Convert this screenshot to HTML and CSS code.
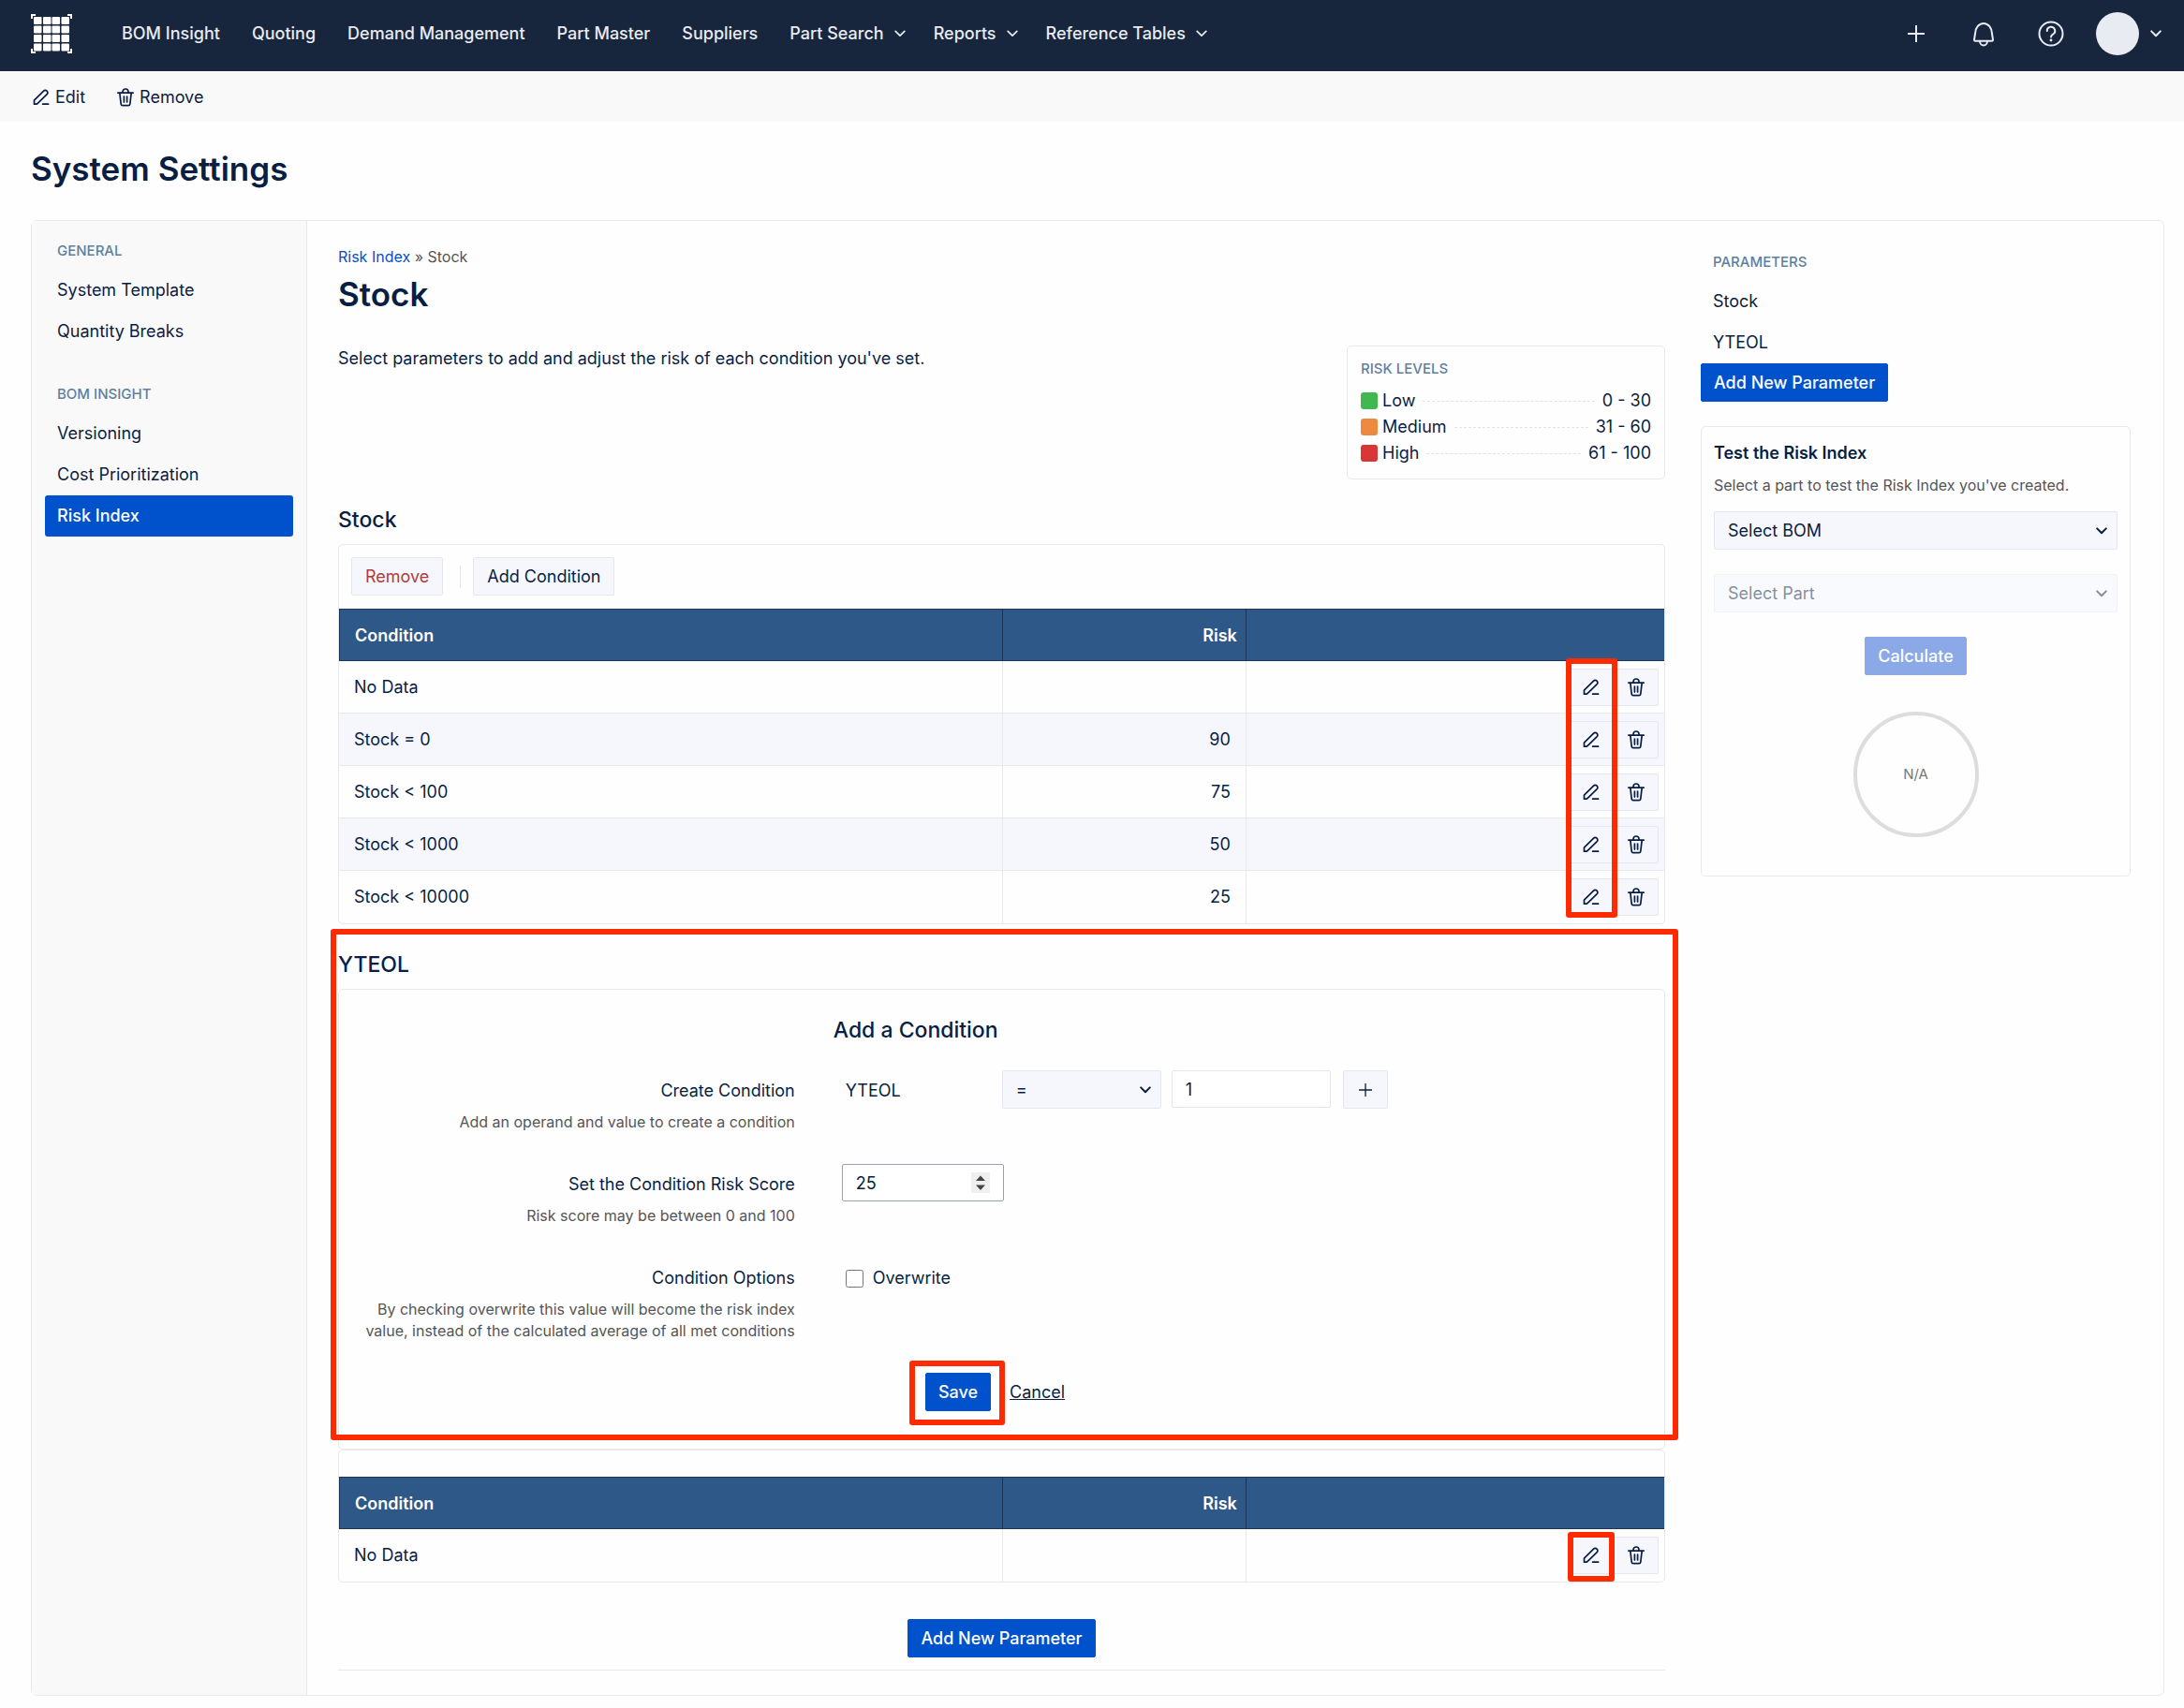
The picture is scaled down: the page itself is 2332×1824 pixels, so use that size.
FILE: index.html
```html
<!DOCTYPE html>
<html lang="en">
<head>
    <meta charset="UTF-8">
    <meta name="viewport" content="width=device-width, initial-scale=1.0">
    <title>System Settings - Risk Index</title>
    <link rel="stylesheet" href="styles.css">
</head>
<body>
    <svg class="sprite" aria-hidden="true">
        <symbol id="icon-edit" viewBox="0 0 18 18">
            <path d="M1.5 16.2v-4L11.6 2.1a2.4 2.4 0 0 1 3.4 0l.2.2a2.4 2.4 0 0 1 0 3.4L5 15.6l-1 .6zM10.6 16.2h6"/>
        </symbol>
        <symbol id="icon-trash" viewBox="0 0 18 20">
            <path d="M.8 5.2h16.4M2.8 5.2l1.4 11.9a1.8 1.8 0 0 0 1.8 1.6h6a1.8 1.8 0 0 0 1.8-1.6l1.4-11.9M6 5V4a3 3 0 0 1 6 0v1M7.4 9v6M10.6 9v6"/>
        </symbol>
        <symbol id="icon-chevron" viewBox="0 0 12 8">
            <path d="M1.2 1.4 6 6.2l4.8-4.8"/>
        </symbol>
        <symbol id="icon-plus" viewBox="0 0 18 18">
            <path d="M9 .5v17M.5 9h17"/>
        </symbol>
    </svg>

    <header class="topbar">
        <a href="#" class="logo" aria-label="Home">
            <svg width="44" height="42" viewBox="0 0 44 42">
                <path class="logo-corner" d="M1 5V1h4M39 1h4v4M1 37v4h4M39 41h4v-4"/>
                <g class="logo-grid">
                    <rect x="3" y="3" width="8.500" height="8" rx="1"/><rect x="13" y="3" width="8.500" height="8" rx="1"/><rect x="22.500" y="3" width="8.500" height="8" rx="1"/><rect x="32.500" y="3" width="8.500" height="8" rx="1"/>
                    <rect x="3" y="12.500" width="8.500" height="8" rx="1"/><rect x="13" y="12.500" width="8.500" height="8" rx="1"/><rect x="22.500" y="12.500" width="8.500" height="8" rx="1"/><rect x="32.500" y="12.500" width="8.500" height="8" rx="1"/>
                    <rect x="3" y="22" width="8.500" height="8" rx="1"/><rect x="13" y="22" width="8.500" height="8" rx="1"/><rect x="22.500" y="22" width="8.500" height="8" rx="1"/><rect x="32.500" y="22" width="8.500" height="8" rx="1"/>
                    <rect x="3" y="31.500" width="8.500" height="8" rx="1"/><rect x="13" y="31.500" width="8.500" height="8" rx="1"/><rect x="22.500" y="31.500" width="8.500" height="8" rx="1"/><rect x="32.500" y="31.500" width="8.500" height="8" rx="1"/>
                </g>
            </svg>
        </a>
        <nav class="main-nav">
            <a href="#">BOM Insight</a>
            <a href="#">Quoting</a>
            <a href="#">Demand Management</a>
            <a href="#">Part Master</a>
            <a href="#">Suppliers</a>
            <a href="#" class="has-menu">Part Search <svg class="icon chevron"><use href="#icon-chevron"/></svg></a>
            <a href="#" class="has-menu">Reports <svg class="icon chevron"><use href="#icon-chevron"/></svg></a>
            <a href="#" class="has-menu">Reference Tables <svg class="icon chevron"><use href="#icon-chevron"/></svg></a>
        </nav>
        <div class="top-actions">
            <button type="button" aria-label="Add"><svg class="icon" width="18" height="18"><use href="#icon-plus"/></svg></button>
            <button type="button" aria-label="Notifications">
                <svg class="icon" width="24" height="28" viewBox="0 0 24 28"><path d="M3 14a9 11 0 0 1 18 0l1 6.400a1.200 1.200 0 0 1-1.200 1.400H3.200A1.200 1.200 0 0 1 2 20.400zM8 22a4 4.500 0 0 0 8 0"/></svg>
            </button>
            <button type="button" aria-label="Help">
                <svg class="icon" width="28" height="28" viewBox="0 0 28 28"><circle cx="14" cy="14" r="12.500"/><path d="M9.800 11a4.200 4.200 0 1 1 6.200 3.600c-1.400.8-2 1.400-2 3"/><circle class="dot" cx="14" cy="21" r="1.400"/></svg>
            </button>
            <button type="button" class="account" aria-label="Account">
                <span class="avatar"></span>
                <svg class="icon chevron"><use href="#icon-chevron"/></svg>
            </button>
        </div>
    </header>

    <div class="page-actions">
        <a href="#"><svg class="icon" width="18" height="18"><use href="#icon-edit"/></svg> Edit</a>
        <a href="#"><svg class="icon" width="18" height="20"><use href="#icon-trash"/></svg> Remove</a>
    </div>

    <h1 class="page-title">System Settings</h1>

    <div class="panel">
        <nav class="sidebar">
            <h4 class="label">General</h4>
            <a href="#">System Template</a>
            <a href="#">Quantity Breaks</a>
            <h4 class="label">BOM Insight</h4>
            <a href="#">Versioning</a>
            <a href="#">Cost Prioritization</a>
            <a href="#" class="active">Risk Index</a>
        </nav>

        <main class="content">
            <div class="breadcrumb"><a href="#">Risk Index</a> » Stock</div>
            <h1 class="content-title">Stock</h1>

            <div class="intro">
                <p>Select parameters to add and adjust the risk of each condition you've set.</p>
                <div class="risk-levels">
                    <h4 class="label">Risk Levels</h4>
                    <div class="level"><span class="swatch low"></span>Low<span class="leader"></span>0 - 30</div>
                    <div class="level"><span class="swatch medium"></span>Medium<span class="leader"></span>31 - 60</div>
                    <div class="level"><span class="swatch high"></span>High<span class="leader"></span>61 - 100</div>
                </div>
            </div>

            <section class="parameter">
                <h2>Stock</h2>
                <div class="card">
                    <div class="card-toolbar">
                        <button type="button" class="btn danger">Remove</button>
                        <span class="divider"></span>
                        <button type="button" class="btn">Add Condition</button>
                    </div>
                    <table class="conditions">
                        <thead>
                            <tr><th class="col-condition">Condition</th><th class="col-risk">Risk</th><th></th></tr>
                        </thead>
                        <tbody>
                            <tr>
                                <td>No Data</td><td class="risk"></td>
                                <td class="row-actions"><div>
                                    <button type="button" class="btn" aria-label="Edit"><svg class="icon" width="18" height="18"><use href="#icon-edit"/></svg></button><button type="button" class="btn" aria-label="Remove"><svg class="icon" width="18" height="20"><use href="#icon-trash"/></svg></button>
                                </div></td>
                            </tr>
                            <tr>
                                <td>Stock = 0</td><td class="risk">90</td>
                                <td class="row-actions"><div>
                                    <button type="button" class="btn" aria-label="Edit"><svg class="icon" width="18" height="18"><use href="#icon-edit"/></svg></button><button type="button" class="btn" aria-label="Remove"><svg class="icon" width="18" height="20"><use href="#icon-trash"/></svg></button>
                                </div></td>
                            </tr>
                            <tr>
                                <td>Stock &lt; 100</td><td class="risk">75</td>
                                <td class="row-actions"><div>
                                    <button type="button" class="btn" aria-label="Edit"><svg class="icon" width="18" height="18"><use href="#icon-edit"/></svg></button><button type="button" class="btn" aria-label="Remove"><svg class="icon" width="18" height="20"><use href="#icon-trash"/></svg></button>
                                </div></td>
                            </tr>
                            <tr>
                                <td>Stock &lt; 1000</td><td class="risk">50</td>
                                <td class="row-actions"><div>
                                    <button type="button" class="btn" aria-label="Edit"><svg class="icon" width="18" height="18"><use href="#icon-edit"/></svg></button><button type="button" class="btn" aria-label="Remove"><svg class="icon" width="18" height="20"><use href="#icon-trash"/></svg></button>
                                </div></td>
                            </tr>
                            <tr>
                                <td>Stock &lt; 10000</td><td class="risk">25</td>
                                <td class="row-actions"><div>
                                    <button type="button" class="btn" aria-label="Edit"><svg class="icon" width="18" height="18"><use href="#icon-edit"/></svg></button><button type="button" class="btn" aria-label="Remove"><svg class="icon" width="18" height="20"><use href="#icon-trash"/></svg></button>
                                </div></td>
                            </tr>
                        </tbody>
                    </table>
                    <span class="marker marker-column"></span>
                </div>
            </section>

            <section class="parameter form-section">
                <h2>YTEOL</h2>
                <form class="card condition-form">
                    <h2>Add a Condition</h2>
                    <div class="form-row">
                        <div class="form-label">
                            <label for="value">Create Condition</label>
                            <p>Add an operand and value to create a condition</p>
                        </div>
                        <div class="controls">
                            <span class="operand">YTEOL</span>
                            <select class="select" aria-label="Operator"><option>=</option><option>&lt;</option><option>&gt;</option></select>
                            <input type="text" id="value" class="input" value="1">
                            <button type="button" class="btn add" aria-label="Add value"><svg class="icon" width="14" height="14"><use href="#icon-plus"/></svg></button>
                        </div>
                    </div>
                    <div class="form-row">
                        <div class="form-label">
                            <label for="score">Set the Condition Risk Score</label>
                            <p>Risk score may be between 0 and 100</p>
                        </div>
                        <div class="controls">
                            <input type="number" id="score" class="input score" value="25" min="0" max="100">
                        </div>
                    </div>
                    <div class="form-row">
                        <div class="form-label">
                            <span>Condition Options</span>
                            <p>By checking overwrite this value will become the risk index value, instead of the calculated average of all met conditions</p>
                        </div>
                        <div class="controls">
                            <label class="check"><input type="checkbox"> Overwrite</label>
                        </div>
                    </div>
                    <div class="form-actions">
                        <span class="save-wrap">
                            <button type="button" class="btn primary">Save</button>
                            <span class="marker marker-save"></span>
                        </span>
                        <a href="#">Cancel</a>
                    </div>
                </form>
                <span class="marker marker-form"></span>
            </section>

            <div class="card">
                <div class="card-spacer"></div>
                <table class="conditions">
                    <thead>
                        <tr><th class="col-condition">Condition</th><th class="col-risk">Risk</th><th></th></tr>
                    </thead>
                    <tbody>
                        <tr>
                            <td>No Data</td><td class="risk"></td>
                            <td class="row-actions"><div>
                                <button type="button" class="btn" aria-label="Edit"><svg class="icon" width="18" height="18"><use href="#icon-edit"/></svg></button><button type="button" class="btn" aria-label="Remove"><svg class="icon" width="18" height="20"><use href="#icon-trash"/></svg></button>
                            </div></td>
                        </tr>
                    </tbody>
                </table>
                <span class="marker marker-edit"></span>
            </div>

            <div class="add-parameter">
                <button type="button" class="btn primary">Add New Parameter</button>
            </div>
        </main>

        <aside class="right">
            <h4 class="label">Parameters</h4>
            <a href="#" class="param-link">Stock</a>
            <a href="#" class="param-link">YTEOL</a>
            <button type="button" class="btn primary">Add New Parameter</button>

            <div class="card test-card">
                <h3>Test the Risk Index</h3>
                <p>Select a part to test the Risk Index you've created.</p>
                <select class="select" aria-label="Select BOM"><option>Select BOM</option></select>
                <select class="select" aria-label="Select Part" disabled><option>Select Part</option></select>
                <button type="button" class="btn primary" disabled>Calculate</button>
                <div class="gauge">N/A</div>
            </div>
        </aside>
    </div>
</body>
</html>
```
FILE: styles.css
```css
* {
    box-sizing: border-box;
}
body {
    margin: 0;
    font-family: Inter, "Liberation Sans", sans-serif;
    font-size: 18px;
    line-height: 28px;
    color: #091e42;
    background-color: #fefefe;
}
h1, h2, h3, h4, p {
    margin: 0;
}
a {
    color: inherit;
    text-decoration: none;
}
button, input, select {
    font: inherit;
    color: inherit;
}
.sprite {
    display: none;
}
.icon {
    fill: none;
    stroke: currentColor;
    stroke-width: 1.7;
    stroke-linecap: round;
    stroke-linejoin: round;
}
.icon .dot {
    fill: currentColor;
    stroke: none;
}
.chevron {
    width: 12px;
    height: 8px;
}
.label {
    font-size: 15px;
    line-height: 24px;
    font-weight: 500;
    text-transform: uppercase;
    color: #5f7f9e;
}

/* top bar */
.topbar {
    display: flex;
    align-items: center;
    height: 76px;
    padding: 0 24px 4px 33px;
    background-color: #18263d;
    color: #e8ebf1;
}
.logo {
    display: flex;
    margin-right: 53px;
}
.logo-corner {
    fill: none;
    stroke: #fff;
    stroke-width: 2;
}
.logo-grid {
    fill: #fff;
}
.main-nav {
    display: flex;
    gap: 34px;
    font-weight: 500;
}
.has-menu {
    display: flex;
    align-items: center;
    gap: 11px;
}
.has-menu + .has-menu {
    margin-left: -4px;
}
.top-actions {
    display: flex;
    align-items: center;
    gap: 24px;
    margin-left: auto;
}
.top-actions button {
    display: flex;
    align-items: center;
    justify-content: center;
    width: 48px;
    height: 48px;
    padding: 0;
    border: 0;
    background: none;
}
.top-actions .icon {
    stroke-width: 2;
}
.top-actions .account {
    width: auto;
    gap: 12px;
}
.avatar {
    width: 46px;
    height: 46px;
    border-radius: 50%;
    background-color: #e8ebf1;
}

/* page header */
.page-actions {
    display: flex;
    gap: 34px;
    padding: 14px 35px 12px;
    background-color: #f9f9f9;
}
.page-actions a {
    display: flex;
    align-items: center;
    gap: 6px;
}
.page-title, .content-title {
    font-size: 35px;
    line-height: 44px;
    font-weight: 600;
}
.page-title {
    padding: 28px 33px 33px;
}

/* panel */
.panel {
    display: flex;
    margin: 0 21px 14px 33px;
    border: 1px solid #e9e9ec;
    border-radius: 6px;
}
.sidebar {
    flex: 0 0 294px;
    padding: 20px 14px;
    border-right: 1px solid #e9e9ec;
    background-color: #f9f9f9;
}
.sidebar .label {
    padding: 0 13px;
    margin-bottom: 8px;
}
.sidebar a + .label {
    margin-top: 33px;
}
.sidebar a {
    display: block;
    padding: 8px 13px;
    border-radius: 3px;
}
.sidebar .active {
    background-color: #0052cc;
    color: #fff;
    font-weight: 500;
}
.content {
    flex: 1;
    padding: 26px 38px 26px 33px;
}
.breadcrumb {
    font-size: 16px;
    line-height: 24px;
    color: #555;
}
.breadcrumb a {
    color: #0052cc;
}
.content-title {
    margin: 6px 0 33px;
}
.intro {
    display: flex;
    justify-content: space-between;
    align-items: flex-start;
}
.risk-levels {
    width: 340px;
    padding: 12px 14px 13px;
    border: 1px solid #e9e9ec;
    border-radius: 5px;
}
.risk-levels .label {
    margin-bottom: 8px;
}
.level {
    display: flex;
    align-items: center;
}
.swatch {
    width: 18px;
    height: 18px;
    margin-right: 5px;
    border-radius: 3px;
}
.low {
    background-color: #3fb94f;
}
.medium {
    background-color: #ee8a3f;
}
.high {
    background-color: #d93636;
}
.leader {
    flex: 1;
    margin: 0 8px;
    border-top: 1px dashed #e2e2e6;
}
h2 {
    font-size: 23px;
    line-height: 32px;
    font-weight: 500;
}
.parameter {
    padding-top: 27px;
}
.parameter > h2 {
    margin-bottom: 10px;
}
.card {
    position: relative;
    border: 1px solid #e9e9ec;
    border-radius: 5px;
}
.card-toolbar {
    display: flex;
    align-items: center;
    padding: 13px 13px 14px;
}
.divider {
    width: 1px;
    height: 24px;
    margin: 0 13px 0 18px;
    background-color: #e6e6ea;
}
.card-spacer {
    height: 28px;
}
.btn {
    height: 41px;
    padding: 0 14px;
    border: 1px solid #e6e6ee;
    border-radius: 2px;
    background-color: #f6f7fd;
}
.btn.danger {
    color: #b33a3a;
}
.btn.primary {
    padding: 0 13px;
    border-color: #0052cc;
    background-color: #0052cc;
    color: #fff;
    font-weight: 500;
}
.btn.primary:disabled {
    border-color: #8aa9e6;
    background-color: #8aa9e6;
}

/* conditions table */
.conditions {
    width: 100%;
    table-layout: fixed;
    border-collapse: separate;
    border-spacing: 0;
}
.conditions th {
    height: 56px;
    padding: 1px 9px 0 16px;
    border: solid #1c3556;
    border-width: 1px 0 1px 1px;
    background-color: #2d5888;
    color: #fff;
    font-weight: 600;
    text-align: left;
}
.conditions .col-condition {
    width: 50%;
}
.conditions .col-risk {
    width: 18.4%;
    text-align: right;
}
.conditions td {
    height: 56px;
    padding: 0 16px;
    border: solid #e9e9ec;
    border-width: 0 0 1px 1px;
}
.conditions td:first-child {
    border-left: 0;
}
.conditions tr:last-child td {
    border-bottom: 0;
}
.conditions tbody tr:nth-child(even) {
    background-color: #f6f7fd;
}
.conditions .risk {
    text-align: right;
}
.conditions .row-actions {
    padding: 0 6px;
}
.row-actions div {
    display: flex;
    justify-content: flex-end;
}
.row-actions .btn {
    display: flex;
    align-items: center;
    justify-content: center;
    width: 48px;
    height: 40px;
    padding: 0;
}

/* condition form */
.form-section {
    position: relative;
}
.condition-form {
    padding: 27px 0 40px;
}
.condition-form h2 {
    margin: 0 0 27px calc(34.4% + 41px);
}
.form-row {
    display: grid;
    grid-template-columns: 34.4% 1fr;
    column-gap: 50px;
    margin-bottom: 33px;
}
.form-label {
    padding: 8px 0 0 14px;
    text-align: right;
}
.form-label p {
    margin-top: 8px;
    font-size: 16px;
    line-height: 23px;
    color: #555;
}
.controls {
    display: flex;
    align-items: flex-start;
}
.operand {
    width: 171px;
    padding: 8px 4px;
}
.select {
    height: 41px;
    padding: 0 14px;
    border: 1px solid #e6e6ee;
    border-radius: 2px;
    appearance: none;
    background: #f6f7fd url("data:image/svg+xml,%3Csvg xmlns='http://www.w3.org/2000/svg' width='12' height='8' fill='none' stroke='%23091e42' stroke-width='2' stroke-linecap='round' stroke-linejoin='round'%3E%3Cpath d='M1.200 1.400 6 6.200l4.800-4.800'/%3E%3C/svg%3E") no-repeat right 10px center;
}
.select:disabled {
    opacity: 0.5;
}
.controls .select {
    width: 170px;
    margin-right: 11px;
}
.input {
    width: 170px;
    height: 40px;
    padding: 0 14px;
    border: 1px solid #e6e6ee;
    border-radius: 2px;
    background-color: #fff;
}
.input.score {
    width: 173px;
    border-color: #97a3b4;
}
.score::-webkit-inner-spin-button {
    width: 20px;
    height: 22px;
    opacity: 1;
    appearance: none;
    background: #efefef url("data:image/svg+xml,%3Csvg xmlns='http://www.w3.org/2000/svg' width='20' height='22' fill='%23444'%3E%3Cpath d='M5 9l5-5.500L15 9zM5 13.500l5 5.500 5-5.500z'/%3E%3C/svg%3E") no-repeat center;
}
.btn.add {
    display: flex;
    align-items: center;
    justify-content: center;
    width: 48px;
    margin-left: 13px;
    padding: 0;
}
.check {
    display: flex;
    align-items: center;
    gap: 10px;
    padding: 8px 4px;
}
.check input {
    width: 19px;
    height: 19px;
    margin: 0;
}
.form-actions {
    display: flex;
    justify-content: center;
    align-items: center;
    gap: 20px;
    padding-right: 14px;
}
.form-actions a {
    text-decoration: underline;
}
.save-wrap {
    position: relative;
    display: flex;
}
.add-parameter {
    display: flex;
    justify-content: center;
    padding: 39px 0 13px;
    border-bottom: 1px solid #e9e9ec;
}

/* highlight boxes laid over the content */
.marker {
    position: absolute;
    border: 6px solid #ff2a00;
    border-radius: 3px;
    pointer-events: none;
}
.marker-column {
    top: 121px;
    right: 50px;
    bottom: 6px;
    width: 55px;
}
.marker-form {
    top: 5px;
    right: -14px;
    bottom: 10px;
    left: -8px;
}
.marker-save {
    top: -13px;
    right: -15px;
    bottom: -15px;
    left: -17px;
}
.marker-edit {
    right: 53px;
    bottom: 0;
    width: 50px;
    height: 53px;
}

/* right column */
.right {
    flex: 0 0 459px;
    margin-right: 35px;
    padding-top: 32px;
}
.right > .label {
    margin: 0 13px 8px;
}
.param-link {
    display: block;
    padding: 8px 13px;
}
.test-card {
    display: flex;
    flex-direction: column;
    margin-top: 26px;
    padding: 14px 13px 41px;
}
.test-card h3 {
    font-size: 18px;
    font-weight: 600;
}
.test-card p {
    margin: 8px 0 16px;
    font-size: 16px;
    line-height: 24px;
    color: #555;
}
.test-card .select {
    margin-bottom: 26px;
}
.test-card .btn {
    align-self: center;
}
.gauge {
    display: flex;
    align-items: center;
    justify-content: center;
    align-self: center;
    width: 134px;
    height: 134px;
    margin-top: 39px;
    border: 4px solid #dedddd;
    border-radius: 50%;
    font-size: 15px;
    color: #777;
}
```
